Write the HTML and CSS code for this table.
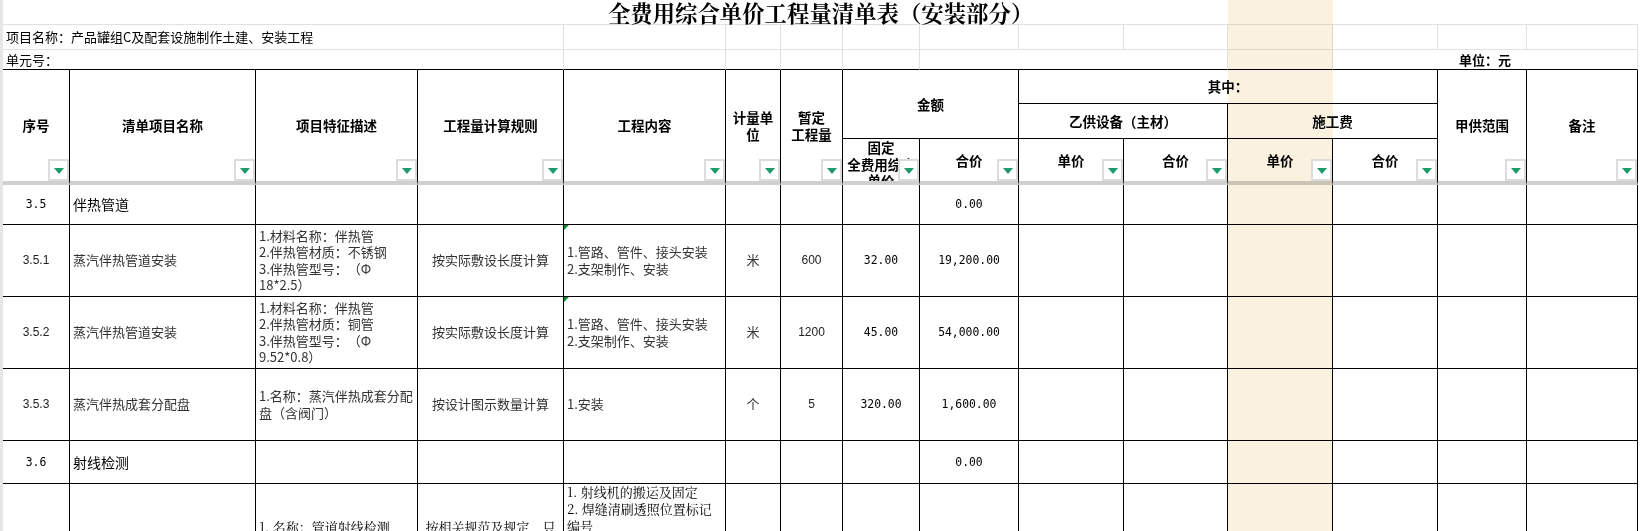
FILE: index.html
```html
<!DOCTYPE html>
<html lang="zh-CN">
<head>
<meta charset="utf-8">
<title>全费用综合单价工程量清单表（安装部分）</title>
<link rel="stylesheet" href="styles.css">
</head>
<body>
<div class="sheet">
  <div class="highlight"></div>
  <table class="grid">
    <colgroup>
      <col class="w1"><col class="w2"><col class="w3"><col class="w4"><col class="w5">
      <col class="w6"><col class="w7"><col class="w8"><col class="w9"><col class="w10">
      <col class="w11"><col class="w12"><col class="w13"><col class="w14"><col class="w15">
    </colgroup>
    <tbody>
      <tr class="r-title">
        <td colspan="15" class="title">全费用综合单价工程量清单表（安装部分）</td>
      </tr>
      <tr class="r-info">
        <td colspan="4" class="info">项目名称：产品罐组C及配套设施制作土建、安装工程</td>
        <td></td><td></td><td></td><td></td><td></td><td></td>
        <td></td><td></td><td></td><td></td><td></td>
      </tr>
      <tr class="r-unit">
        <td colspan="4" class="info">单元号：</td>
        <td></td><td></td><td></td><td></td>
        <td colspan="3"></td>
        <td></td>
        <td colspan="3" class="unit">单位：元</td>
      </tr>
      <tr class="h1">
        <th rowspan="3" class="base">序号<span class="filter"></span></th>
        <th rowspan="3" class="base">清单项目名称<span class="filter"></span></th>
        <th rowspan="3" class="base">项目特征描述<span class="filter"></span></th>
        <th rowspan="3" class="base">工程量计算规则<span class="filter"></span></th>
        <th rowspan="3" class="base">工程内容<span class="filter"></span></th>
        <th rowspan="3" class="base">计量单<br>位<span class="filter"></span></th>
        <th rowspan="3" class="base">暂定<br>工程量<span class="filter"></span></th>
        <th colspan="2" rowspan="2">金额</th>
        <th colspan="4">其中：</th>
        <th rowspan="3" class="base">甲供范围<span class="filter"></span></th>
        <th rowspan="3" class="base">备注<span class="filter"></span></th>
      </tr>
      <tr class="h2">
        <th colspan="2">乙供设备（主材）</th>
        <th colspan="2">施工费</th>
      </tr>
      <tr class="h3">
        <th class="base"><div class="clip">固定<br>全费用综合<br>单价</div><span class="filter"></span></th>
        <th class="base">合价<span class="filter"></span></th>
        <th class="base">单价<span class="filter"></span></th>
        <th class="base">合价<span class="filter"></span></th>
        <th class="base">单价<span class="filter"></span></th>
        <th class="base">合价<span class="filter"></span></th>
      </tr>

      <tr class="b-sec">
        <td class="c mono">3.5</td>
        <td class="sec">伴热管道</td>
        <td></td><td></td><td></td><td></td><td></td><td></td>
        <td class="c mono">0.00</td>
        <td></td><td></td><td></td><td></td><td></td><td></td>
      </tr>
      <tr class="b-item">
        <td class="c sans">3.5.1</td>
        <td class="txt">蒸汽伴热管道安装</td>
        <td class="txt">1.材料名称：伴热管<br>2.伴热管材质：不锈钢<br>3.伴热管型号：（Φ<br>18*2.5）</td>
        <td class="txt c">按实际敷设长度计算</td>
        <td class="txt flag">1.管路、管件、接头安装<br>2.支架制作、安装</td>
        <td class="txt c">米</td>
        <td class="c sans">600</td>
        <td class="c mono">32.00</td>
        <td class="c mono">19,200.00</td>
        <td></td><td></td><td></td><td></td><td></td><td></td>
      </tr>
      <tr class="b-item">
        <td class="c sans">3.5.2</td>
        <td class="txt">蒸汽伴热管道安装</td>
        <td class="txt">1.材料名称：伴热管<br>2.伴热管材质：铜管<br>3.伴热管型号：（Φ<br>9.52*0.8）</td>
        <td class="txt c">按实际敷设长度计算</td>
        <td class="txt flag">1.管路、管件、接头安装<br>2.支架制作、安装</td>
        <td class="txt c">米</td>
        <td class="c sans">1200</td>
        <td class="c mono">45.00</td>
        <td class="c mono">54,000.00</td>
        <td></td><td></td><td></td><td></td><td></td><td></td>
      </tr>
      <tr class="b-item">
        <td class="c sans">3.5.3</td>
        <td class="txt">蒸汽伴热成套分配盘</td>
        <td class="txt">1.名称：蒸汽伴热成套分配<br>盘（含阀门）</td>
        <td class="txt c">按设计图示数量计算</td>
        <td class="txt">1.安装</td>
        <td class="txt c">个</td>
        <td class="c sans">5</td>
        <td class="c mono">320.00</td>
        <td class="c mono">1,600.00</td>
        <td></td><td></td><td></td><td></td><td></td><td></td>
      </tr>
      <tr class="b-sec2">
        <td class="c mono">3.6</td>
        <td class="sec">射线检测</td>
        <td></td><td></td><td></td><td></td><td></td><td></td>
        <td class="c mono">0.00</td>
        <td></td><td></td><td></td><td></td><td></td><td></td>
      </tr>
      <tr class="b-last">
        <td class="c sans"></td>
        <td class="txt"></td>
        <td class="song">1. 名称：管道射线检测<br>2. 检测方法：X射线</td>
        <td class="song c">按相关规范及规定，只<br>计算合格片数</td>
        <td class="song tight">1. 射线机的搬运及固定<br>2. 焊缝清刷透照位置标记<br>编号<br>3. 拍片、暗室处理<br>4. 评片<br>5. 出具检测报告</td>
        <td></td><td></td><td></td><td></td>
        <td></td><td></td><td></td><td></td><td></td><td></td>
      </tr>
    </tbody>
  </table>
</div>
</body>
</html>
```
FILE: styles.css
```css
html, body {
  margin: 0;
  padding: 0;
  overflow: hidden;
  background: #ffffff;
}

body {
  font-family: "Noto Sans CJK SC", "Liberation Sans", sans-serif;
  color: #000;
  text-spacing-trim: space-all;
}

.sheet {
  position: relative;
  width: 1635px;
  border-left: 3px solid #e6e6e6;
}

/* reading-mode column highlight lying over the cells */
.highlight {
  position: absolute;
  top: 0;
  bottom: 0;
  left: 1225px;
  width: 105px;
  background: #faf1df;
  mix-blend-mode: multiply;
  z-index: 1;
  pointer-events: none;
}

.grid {
  border-collapse: separate;
  border-spacing: 0;
  table-layout: fixed;
  width: 1635px;
}

.w1 { width: 67px; }
.w2 { width: 186px; }
.w3 { width: 162px; }
.w4 { width: 146px; }
.w5 { width: 162px; }
.w6 { width: 55px; }
.w7 { width: 62px; }
.w8 { width: 77px; }
.w9 { width: 99px; }
.w10 { width: 105px; }
.w11 { width: 104px; }
.w12 { width: 105px; }
.w13 { width: 105px; }
.w14 { width: 89px; }
.w15 { width: 111px; }

.grid td,
.grid th {
  box-sizing: border-box;
  padding: 0 3px;
  white-space: nowrap;
  vertical-align: middle;
  position: relative;
}

/* row heights */
.r-title { height: 25px; }
.r-info { height: 25px; }
.r-unit { height: 20px; }
.h1 { height: 34px; }
.h2 { height: 35px; }
.h3 { height: 46px; }
.b-sec { height: 40px; }
.b-item { height: 72px; }
.b-sec2 { height: 43px; }
.b-last { height: 102px; }

/* top area */
.title {
  font-family: "Noto Serif CJK SC", "Noto Sans CJK SC", serif;
  font-size: 22.4px;
  font-weight: 700;
  line-height: 24px;
  text-align: center;
  padding-right: 8px;
  border-bottom: 1px solid #e1e1e1;
}

.r-info td {
  border-right: 1px solid #e1e1e1;
  border-bottom: 1px solid #e1e1e1;
}

.r-unit td {
  border-right: 1px solid #e1e1e1;
  border-bottom: 1px solid #000;
}

.info {
  font-size: 13px;
  line-height: 18px;
  text-align: left;
}

.unit {
  font-size: 13px;
  font-weight: 700;
  text-align: center;
}

/* header */
.grid th {
  font-size: 13.5px;
  font-weight: 700;
  line-height: 17px;
  text-align: center;
  border-right: 1px solid #000;
  border-bottom: 1px solid #000;
}

.grid th.base {
  border-bottom: 4px solid #cfcfcf;
}

.clip {
  height: 42px;
  overflow: hidden;
  line-height: 16.5px;
}

.h3 th:first-child {
  vertical-align: top;
}

.filter {
  position: absolute;
  right: 0;
  bottom: 0;
  width: 21px;
  height: 22px;
  box-sizing: border-box;
  border: 2px solid #dcdcdc;
  background: #fff;
  z-index: 2;
  display: flex;
  align-items: center;
  justify-content: center;
}

.filter::after {
  content: "";
  width: 0;
  height: 0;
  margin-top: 2px;
  border-left: 5px solid transparent;
  border-right: 5px solid transparent;
  border-top: 6px solid #1e9b6a;
}

/* body */
.b-sec td,
.b-item td,
.b-sec2 td,
.b-last td {
  border-right: 1px solid #000;
  border-bottom: 1px solid #000;
  font-size: 13px;
  line-height: 16.5px;
  color: #333;
}

.c { text-align: center; }

.mono {
  font-family: "DejaVu Sans Mono", "Liberation Mono", monospace;
  font-size: 11.4px !important;
  color: #000 !important;
}

.sans {
  font-family: "Liberation Sans", Arial, sans-serif;
  font-size: 12px !important;
  color: #222 !important;
}

.txt {
  text-align: left;
}

.txt.c { text-align: center; }

.sec {
  font-size: 14px !important;
  color: #000 !important;
}

.song {
  font-family: "Noto Serif CJK SC", "Noto Sans CJK SC", serif;
  color: #000 !important;
  line-height: 17px !important;
}

.tight {
  line-height: 16.8px !important;
}

.flag::before {
  content: "";
  position: absolute;
  top: 0;
  left: 0;
  width: 0;
  height: 0;
  border-top: 5px solid #148a34;
  border-right: 5px solid transparent;
}
```
